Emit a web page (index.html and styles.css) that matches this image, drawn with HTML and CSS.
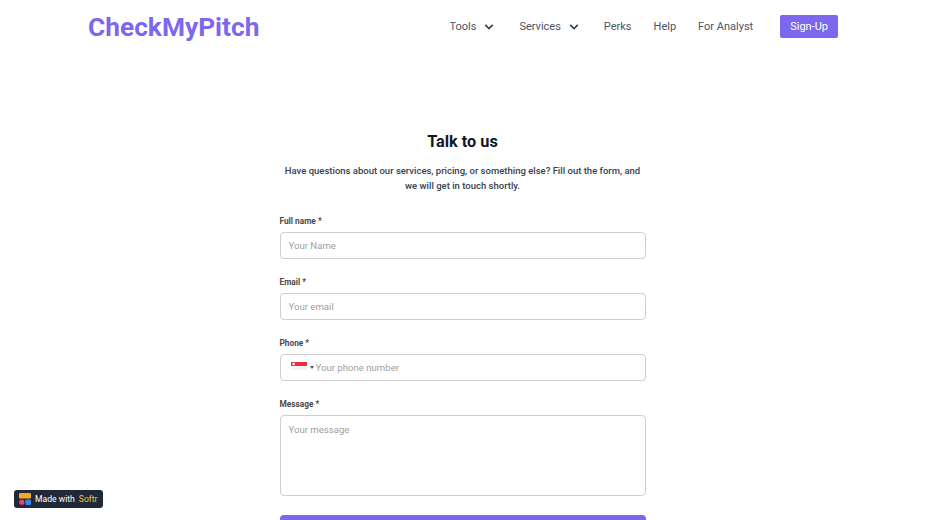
FILE: index.html
```html
<!DOCTYPE html>
<html lang="en">
<head>
    <meta charset="UTF-8">
    <meta name="viewport" content="width=device-width, initial-scale=1.0">
    <title>Talk to us</title>
    <link rel="stylesheet" href="styles.css">
</head>
<body>
    <header class="navbar">
        <a class="logo" href="#">CheckMyPitch</a>
        <nav class="nav-links">
            <a class="nav-item has-menu" href="#">Tools
                <svg class="chevron" viewBox="0 0 12 8"><path d="M1.5 1.5 6 6l4.5-4.5"/></svg>
            </a>
            <a class="nav-item has-menu" href="#">Services
                <svg class="chevron" viewBox="0 0 12 8"><path d="M1.5 1.5 6 6l4.5-4.5"/></svg>
            </a>
            <a class="nav-item" href="#">Perks</a>
            <a class="nav-item" href="#">Help</a>
            <a class="nav-item" href="#">For Analyst</a>
            <a class="signup" href="#">Sign-Up</a>
        </nav>
    </header>

    <main class="contact">
        <h1>Talk to us</h1>
        <p class="intro">Have questions about our services, pricing, or something else? Fill out the form, and we will get in touch shortly.</p>
        <form class="contact-form">
            <div class="field">
                <label for="name">Full name *</label>
                <input id="name" type="text" placeholder="Your Name">
            </div>
            <div class="field">
                <label for="email">Email *</label>
                <input id="email" type="text" placeholder="Your email">
            </div>
            <div class="field">
                <label for="phone">Phone *</label>
                <div class="phone-box">
                    <svg class="flag" viewBox="0 0 16 8">
                        <rect width="16" height="4" fill="#e8303f"/>
                        <rect y="4" width="16" height="4" fill="#f4f4f4"/>
                        <circle cx="2.6" cy="2" r="1.2" fill="#fff"/>
                    </svg>
                    <span class="caret"></span>
                    <input id="phone" type="text" placeholder="Your phone number">
                </div>
            </div>
            <div class="field">
                <label for="message">Message *</label>
                <textarea id="message" placeholder="Your message"></textarea>
            </div>
            <button class="submit" type="button">Submit</button>
        </form>
    </main>

    <a class="badge" href="#">
        <svg class="badge-icon" viewBox="0 0 12 12">
            <rect width="12" height="5.4" rx="1" fill="#f5a623"/>
            <circle cx="2.8" cy="9.2" r="2.6" fill="#e8417a"/>
            <rect x="6.4" y="6.4" width="5.6" height="5.6" rx="1" fill="#3b82e6"/>
        </svg>
        Made with <span class="badge-name">Softr</span>
    </a>
</body>
</html>
```

FILE: styles.css
```css
html, body {
    height: 520px;
    overflow: hidden;
}
body {
    font-family: Roboto, "Liberation Sans", sans-serif;
    background-color: #fff;
    color: #111827;
    margin: 0;
}
a {
    text-decoration: none;
}
.navbar {
    display: flex;
    align-items: center;
    justify-content: space-between;
    height: 53px;
    padding: 0 87px 0 88px;
}
.logo {
    font-size: 26.3px;
    font-weight: 700;
    color: #7b68ee;
}
.nav-links {
    display: flex;
    align-items: center;
    gap: 22px;
}
.nav-item {
    display: flex;
    align-items: center;
    gap: 8px;
    font-size: 11px;
    color: #4b5563;
}
.has-menu {
    margin-right: 3px;
}
.chevron {
    width: 10px;
    height: 8px;
    margin-top: 1px;
    fill: none;
    stroke: #374151;
    stroke-width: 2;
}
.signup {
    display: flex;
    align-items: center;
    height: 23px;
    margin-left: 5px;
    padding: 0 10px;
    font-size: 11px;
    color: #fff;
    background-color: #7b68ee;
    border-radius: 2px;
}
.contact {
    display: flex;
    flex-direction: column;
    align-items: center;
    padding-top: 78px;
}
h1 {
    margin: 0;
    font-size: 16.3px;
    line-height: 22px;
    font-weight: 700;
    color: #111827;
}
.intro {
    width: 360px;
    margin: 11px 0 0;
    font-size: 9.5px;
    line-height: 14.5px;
    font-weight: 500;
    text-align: center;
    color: #374151;
}
.contact-form {
    width: 366px;
    margin-top: 21px;
}
.field {
    margin-bottom: 16px;
}
label {
    display: block;
    margin-bottom: 4px;
    font-size: 8.3px;
    line-height: 14px;
    font-weight: 700;
    color: #4a4a4a;
}
input, textarea {
    font-family: inherit;
    font-size: 9.6px;
    color: #374151;
    outline: none;
}
input::placeholder, textarea::placeholder {
    color: #a0a0a0;
    opacity: 1;
}
.field > input {
    display: block;
    box-sizing: border-box;
    width: 100%;
    height: 27px;
    padding: 0 8px;
    border: 1px solid #cfcfcf;
    border-radius: 4px;
}
.phone-box {
    display: flex;
    align-items: center;
    box-sizing: border-box;
    width: 100%;
    height: 27px;
    padding: 0 8px 0 10px;
    border: 1px solid #cfcfcf;
    border-radius: 4px;
}
.flag {
    width: 16px;
    height: 8px;
    margin-top: -4px;
}
.caret {
    width: 0;
    height: 0;
    margin-left: 3px;
    border-style: solid;
    border-width: 3px 2px 0;
    border-color: #4b5563 transparent transparent;
}
.phone-box input {
    flex: 1;
    min-width: 0;
    margin-left: 2px;
    padding: 0;
    border: none;
}
textarea {
    display: block;
    box-sizing: border-box;
    width: 100%;
    height: 81px;
    padding: 8px;
    border: 1px solid #cfcfcf;
    border-radius: 4px;
    resize: none;
}
.submit {
    display: block;
    width: 100%;
    height: 36px;
    margin-top: 19px;
    font-family: inherit;
    font-size: 11px;
    color: #fff;
    background-color: #7b68ee;
    border: none;
    border-radius: 4px;
}
.badge {
    position: fixed;
    left: 14px;
    bottom: 12px;
    display: flex;
    align-items: center;
    gap: 4px;
    height: 18px;
    padding: 0 5px;
    font-size: 8.6px;
    color: #fff;
    background-color: #1f2937;
    border-radius: 3px;
}
.badge-icon {
    width: 12px;
    height: 12px;
}
.badge-name {
    color: #f5c542;
}
```
